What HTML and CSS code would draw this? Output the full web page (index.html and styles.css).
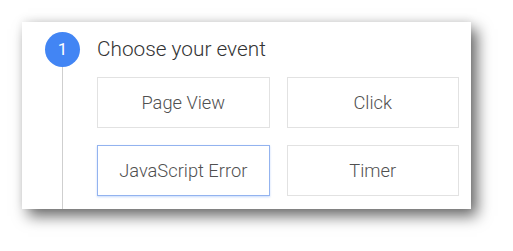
FILE: index.html
```html
<!DOCTYPE html>
<html lang="en">
<head>
    <meta charset="UTF-8">
    <meta name="viewport" content="width=device-width, initial-scale=1.0">
    <title>Choose your event</title>
    <link rel="stylesheet" href="styles.css">
</head>
<body>

    <div class="card">
        <div class="stepper">
            <div class="step-num">1</div>
            <div class="step-line"></div>
        </div>

        <div class="step-body">
            <h2>Choose your event</h2>
            <div class="events">
                <button class="event">Page View</button>
                <button class="event">Click</button>
                <button class="event selected">JavaScript Error</button>
                <button class="event">Timer</button>
            </div>
        </div>
    </div>

</body>
</html>
```

FILE: styles.css
```css
* {
    margin: 0;
    padding: 0;
    box-sizing: border-box;
    font-family: Roboto, "Liberation Sans", sans-serif;
}

body {
    background: white;
    width: 513px;
    height: 251px;
    overflow: hidden;
}

.card {
    display: flex;
    width: 449px;
    height: 187px;
    margin: 22px 0 0 22px;
    padding: 10px 0 0 23px;
    background: white;
    box-shadow: 6px 7px 14px rgba(0, 0, 0, 0.6), 0 -3px 8px rgba(0, 0, 0, 0.05);
}

.stepper {
    display: flex;
    flex-direction: column;
    align-items: center;
    width: 35px;
}

.step-num {
    width: 35px;
    height: 35px;
    border-radius: 50%;
    background: #4285f4;
    color: white;
    font-size: 17px;
    line-height: 35px;
    text-align: center;
}

.step-line {
    flex: 1;
    width: 1px;
    background: #cfcfcf;
}

.step-body {
    margin-left: 17px;
    width: 362px;
}

h2 {
    font-size: 20.8px;
    font-weight: 300;
    color: #333;
    line-height: 35px;
    margin-bottom: 10px;
}

.events {
    display: grid;
    grid-template-columns: 1fr 1fr;
    gap: 17px;
}

.event {
    height: 51px;
    background: white;
    border: 1px solid #e2e2e2;
    font-size: 18.3px;
    font-weight: 300;
    color: #505050;
    cursor: pointer;
}

.event.selected {
    border-color: #93b3ef;
    box-shadow: 0 1px 2px rgba(66, 133, 244, 0.3);
}
```
